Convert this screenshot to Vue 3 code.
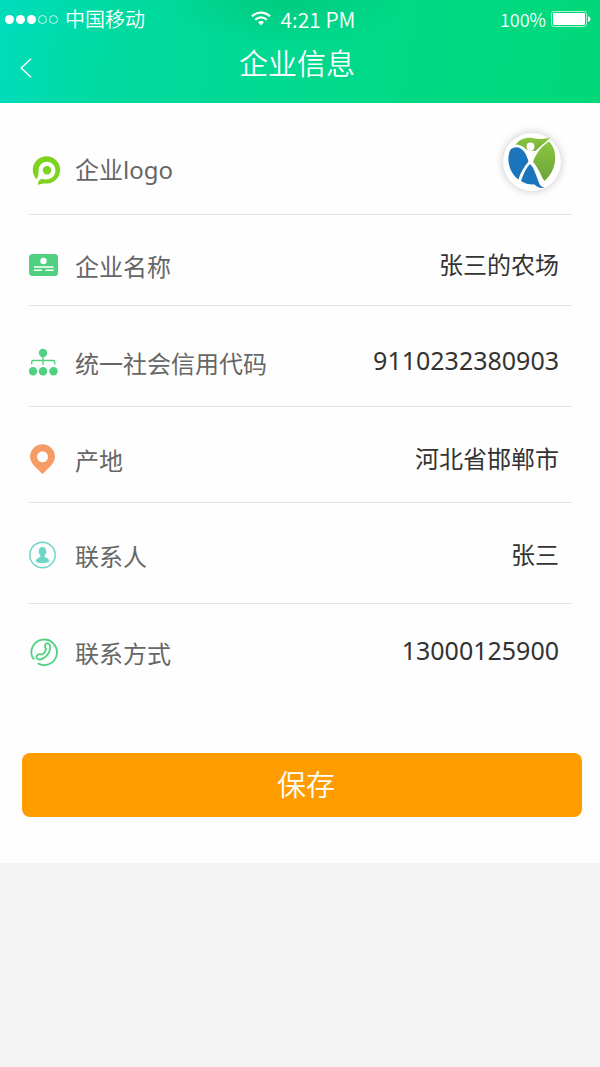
<template>
  <div class="page">
    <header class="header">
      <div class="status-bar">
        <div class="carrier">
          <span class="signal">
            <i v-for="n in 5" :key="n" class="dot" :class="{ empty: n > 3 }"></i>
          </span>
          <span>中国移动</span>
        </div>
        <div class="clock">
          <svg width="20" height="16" viewBox="0 0 20 16" fill="none" stroke="#fff" stroke-width="2.2">
            <path d="M1 5.4C6.2.3 13.8.3 19 5.4" />
            <path d="M4.2 8.8c3.4-3.2 8.2-3.2 11.6 0" />
            <path d="M7 11.2c1.8-1.6 4.2-1.6 6 0L10 14.4z" fill="#fff" stroke="none" />
          </svg>
          <span>4:21 PM</span>
        </div>
        <div class="battery">
          <span>100%</span>
          <svg width="40" height="16" viewBox="0 0 40 16">
            <rect x=".5" y=".5" width="35" height="15" rx="2" fill="none" stroke="#a5f1cf" />
            <rect x="2" y="2" width="32" height="12" rx="1" fill="#fff" />
            <path d="M37 5.2c3.2.6 3.2 5 0 5.6z" fill="#fff" />
          </svg>
        </div>
      </div>
      <div class="nav-bar">
        <button class="back" type="button" aria-label="返回">
          <svg width="12" height="20" viewBox="0 0 12 20" fill="none" stroke="#fff" stroke-width="1.5">
            <path d="M11 .8L1.2 10 11 19.2" />
          </svg>
        </button>
        <h1>企业信息</h1>
      </div>
    </header>

    <form class="card" @submit.prevent>
      <div class="row row-logo">
        <svg class="icon" width="32" height="30" viewBox="0 0 32 30">
          <path
            d="M7.400 24.200A13.700 13.700 0 1 1 18 28.600c-3.500-.3-6 .2-9.200 1.400.2-3.200 1.200-5 3.700-6.200 5.500 2 14-.5 14-8.600a8.500 8.500 0 0 0-17 0c0 3.500.2 6-2.100 9z"
            fill="#7ed321"
          />
          <circle cx="18" cy="15.200" r="4.200" fill="#7ed321" />
        </svg>
        <span class="label">企业logo</span>
        <button class="avatar" type="button" aria-label="企业logo">
          <svg width="50" height="54" viewBox="0 0 50 54">
            <defs>
              <linearGradient id="leaf" x1="0" y1="0" x2="0" y2="1">
                <stop offset="0" stop-color="#8cc63f" />
                <stop offset="1" stop-color="#6ba33a" />
              </linearGradient>
            </defs>
            <path d="M8.500 9.500C13 4 19 2 25 3c6 1 12 1.500 18-.5C39 8 31 12 25 20 20 15 16 9.500 8.500 9.500z" fill="url(#leaf)" />
            <path d="M42 6.500C46.500 11 49 18 48 26c-.8 8-5 15-10.500 20C34 41 31 32 26 27 29 18 35 11 42 6.500z" fill="url(#leaf)" />
            <path d="M3.500 14.500c5-4 10-2.500 13.500 2 2.500 3.500 3.500 6.500 4.500 10C17 32 13 38 11.500 44.500 3 39-1.500 25 3.500 14.500z" fill="#1b75bc" />
            <path d="M23 29c4.500 4 6.500 13 9.500 20 .8 1.800 2.500 3 4.500 3.800-3.500.6-7-.4-9.500-3.300-4.500.5-9.500-.8-13.500-3.500C16 40 19 33 23 29z" fill="#1b75bc" />
            <path d="M17.500 14.500L24 21l5-5z" fill="#fff" />
            <circle cx="23.500" cy="11.500" r="4" fill="#fff" />
          </svg>
        </button>
      </div>

      <div v-for="field in fields" :key="field.id" class="row" :class="'row-' + field.id">
        <svg v-if="field.id === 'name'" class="icon" width="30" height="30" viewBox="0 0 30 30">
          <rect x="0" y="4" width="29" height="22" rx="3.500" fill="#50d080" />
          <circle cx="14.500" cy="11" r="3.200" fill="#fff" />
          <path d="M5 17h19.500M5 20.300h8M16.500 20.300h8" stroke="#fff" stroke-width="1.500" />
        </svg>
        <svg v-else-if="field.id === 'code'" class="icon" width="30" height="30" viewBox="0 0 30 30">
          <g fill="#50d080">
            <circle cx="14" cy="6" r="4.200" />
            <circle cx="4" cy="24.300" r="4.200" />
            <circle cx="14" cy="24.300" r="4.200" />
            <circle cx="24.500" cy="24.300" r="4.200" />
          </g>
          <path d="M14 6v12M2.700 17.500V15q0-1.500 1.500-1.500h20q1.500 0 1.500 1.500v2.500" fill="none" stroke="#50d080" stroke-width="1.300" />
        </svg>
        <svg v-else-if="field.id === 'origin'" class="icon" width="30" height="30" viewBox="0 0 30 30">
          <path
            d="M13.500 30C9 25.500 1 19.500 1 12.800a12.400 12.400 0 0 1 25 0C26 19.500 18 25.500 13.500 30zM13.500 7.300a5.500 5.500 0 1 0 0 11 5.500 5.500 0 0 0 0-11z"
            fill="#f79b66"
            fill-rule="evenodd"
          />
        </svg>
        <svg v-else-if="field.id === 'contact'" class="icon" width="30" height="30" viewBox="0 0 30 30">
          <circle cx="13.500" cy="15" r="12.700" fill="none" stroke="#6ed6c6" stroke-width="1.500" />
          <path
            d="M13.500 7c2.500 0 3.800 1.800 3.700 4.500.5 1-.2 1.600-.5 2.200-.3 1.300-1.200 1.600-1.200 2.500 0 1.500 4.700 1.200 4.700 5.200-3 2-10.400 2-13.400 0 0-4 4.700-3.700 4.700-5.200 0-.9-.9-1.200-1.200-2.500-.3-.6-1-1.200-.5-2.200C9.700 8.800 11 7 13.500 7z"
            fill="#6ed6c6"
          />
        </svg>
        <svg v-else class="icon" width="30" height="30" viewBox="0 0 30 30" fill="none" stroke="#50d080" stroke-width="1.800">
          <path d="M8.600 26.300A12.800 12.800 0 1 0 3.800 21.200" />
          <path d="M3.800 21.200c.5.700 1.200.6 1.800 0" />
          <path
            d="M16 8.500c.2-2.200 3.300-2.900 4.600-.8 2.200 4.800-2 12.300-7.800 14.400-2.600.9-5.300.1-5.300-2 0-2 2-3.200 3.900-2.800 1 .2 1.600.3 2.500-.3 1.400-1 2.600-2.700 2.900-4.400.2-1.700-1-2.300-.8-4.100z"
          />
        </svg>
        <label class="label" :for="field.id">{{ field.label }}</label>
        <input :id="field.id" v-model="field.value" class="value" :class="{ number: field.number }" type="text" />
      </div>

      <button class="save" type="submit">保存</button>
    </form>
  </div>
</template>


<script setup>
import { ref } from 'vue'

const fields = ref([
  { id: 'name', label: '企业名称', value: '张三的农场' },
  { id: 'code', label: '统一社会信用代码', value: '9110232380903', number: true },
  { id: 'origin', label: '产地', value: '河北省邯郸市' },
  { id: 'contact', label: '联系人', value: '张三' },
  { id: 'phone', label: '联系方式', value: '13000125900', number: true }
])
</script>

<style>
body {
  margin: 0;
  background: #f3f3f3;
}
</style>

<style scoped>
.page {
  min-height: 100vh;
  background: #f3f3f3;
  font-family: "Noto Sans", "Noto Sans CJK SC", sans-serif;
}

.header {
  height: 103px;
  color: #fff;
  background:
    radial-gradient(ellipse 120px 44px at 285px 0, rgba(0, 198, 120, 0.7), transparent),
    linear-gradient(100deg, #00dcbc 0%, #00da9f 20%, #00d993 42%, #00d986 65%, #00d878 100%);
}

.status-bar {
  display: grid;
  grid-template-columns: 1fr auto 1fr;
  align-items: center;
  height: 38px;
  padding: 0 9px 0 5px;
  font-family: "Noto Sans CJK SC", sans-serif;
  font-size: 20px;
  font-weight: 350;
  line-height: 38px;
}

.carrier,
.clock,
.battery {
  display: flex;
  align-items: center;
}

.carrier {
  gap: 7px;
}

.clock {
  gap: 10px;
  margin-left: 10px;
  font-size: 21px;
}

.battery {
  justify-content: flex-end;
  gap: 5px;
  font-size: 18px;
}

.signal {
  display: flex;
  gap: 2px;
}

.dot {
  box-sizing: border-box;
  width: 9px;
  height: 9px;
  border-radius: 50%;
  background: #fff;
}

.dot.empty {
  border: 1px solid #c5f7e6;
  background: none;
}

.nav-bar {
  display: grid;
  grid-template-columns: 52px 1fr 58px;
  align-items: center;
  height: 60px;
}

.back {
  display: flex;
  padding: 0 20px;
  border: 0;
  background: none;
  cursor: pointer;
}

h1 {
  margin: 0 0 8px;
  font-size: 29px;
  font-weight: 350;
  line-height: 40px;
  text-align: center;
}

.card {
  padding: 0 18px 46px 22px;
  background: #fefefe;
}

.row {
  display: flex;
  align-items: center;
  box-sizing: content-box;
  height: 36px;
  margin: 0 10px 0 7px;
  padding-right: 13px;
  border-bottom: 1px solid #e3e3e3;
}

.row-logo {
  padding-top: 49px;
  padding-bottom: 26px;
}

.row-name {
  padding-top: 34px;
  padding-bottom: 20px;
}

.row-code {
  padding-top: 40px;
  padding-bottom: 24px;
}

.row-origin {
  padding-top: 36px;
  padding-bottom: 23px;
}

.row-contact {
  padding-top: 36px;
  padding-bottom: 28px;
}

.row-phone {
  padding-top: 32px;
  padding-bottom: 81px;
  border-bottom: 0;
}

.icon {
  flex: none;
  margin-right: 16px;
  margin-bottom: 4px;
}

.row-logo .icon {
  margin-right: 14px;
  margin-bottom: 0;
}

.label {
  flex: none;
  color: #666;
  font-size: 24px;
  line-height: 36px;
}

.value {
  box-sizing: border-box;
  flex: 1;
  min-width: 0;
  height: 36px;
  padding: 0 0 8px;
  border: 0;
  outline: 0;
  background: none;
  color: #333;
  font-family: inherit;
  font-size: 24px;
  text-align: right;
}

.number {
  font-size: 25px;
}

.avatar {
  display: flex;
  flex: none;
  align-items: center;
  justify-content: center;
  width: 58px;
  height: 58px;
  margin: 0 -2px 16px auto;
  padding: 0;
  border: 0;
  border-radius: 50%;
  background: #fff;
  box-shadow: 0 0 9px rgba(0, 0, 0, 0.22);
  cursor: pointer;
}

.save {
  display: block;
  width: 100%;
  height: 64px;
  padding: 0 0 4px 8px;
  border: 0;
  border-radius: 8px;
  background: #ff9c00;
  color: #fff;
  font-family: inherit;
  font-size: 29px;
  font-weight: 350;
  cursor: pointer;
}
</style>
